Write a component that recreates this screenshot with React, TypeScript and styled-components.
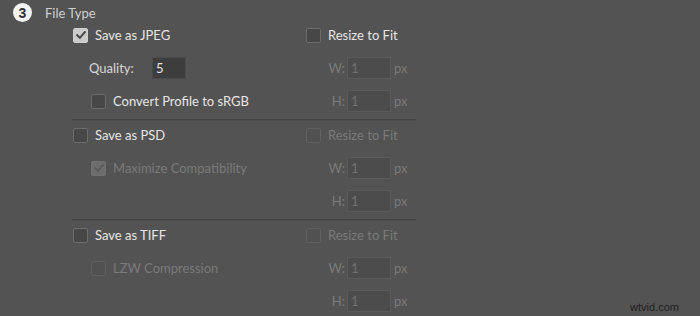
import React from 'react';
import styled, { createGlobalStyle } from 'styled-components';

const GlobalStyle = createGlobalStyle`
  html, body {
    margin: 0;
    padding: 0;
    background: #535353;
  }
  body {
    font-family: Lato, "Liberation Sans", sans-serif;
    -webkit-font-smoothing: antialiased;
  }
`;

type Row = {
  label: string;
  checked: boolean;
  disabled: boolean;
  sub: { kind: 'quality' } | { kind: 'check'; label: string; checked: boolean; disabled: boolean };
};

const sections: Row[] = [
  {
    label: 'Save as JPEG',
    checked: true,
    disabled: false,
    sub: { kind: 'quality' },
  },
  {
    label: 'Save as PSD',
    checked: false,
    disabled: true,
    sub: { kind: 'check', label: 'Maximize Compatibility', checked: true, disabled: true },
  },
  {
    label: 'Save as TIFF',
    checked: false,
    disabled: true,
    sub: { kind: 'check', label: 'LZW Compression', checked: false, disabled: true },
  },
];

const CheckBox: React.FC<{ checked: boolean; disabled: boolean }> = ({ checked, disabled }) => (
  <Box $checked={checked} $disabled={disabled}>
    {checked && (
      <svg width="12" height="12" viewBox="0 0 12 12">
        <polyline
          points="2.2,6.2 4.9,8.8 9.8,3.2"
          fill="none"
          stroke={disabled ? '#5a5a5a' : '#474747'}
          strokeWidth="2"
          strokeLinecap="square"
        />
      </svg>
    )}
  </Box>
);

const SizeField: React.FC<{ axis: string; disabled: boolean }> = ({ axis, disabled }) => (
  <SizeRow $disabled={disabled}>
    <AxisLabel>{axis}:</AxisLabel>
    <Field $disabled={disabled} $width={44}>1</Field>
    <Unit>px</Unit>
  </SizeRow>
);

const App: React.FC = () => {
  return (
    <>
      <GlobalStyle />
      <Page>
        <Header>
          <StepBadge>3</StepBadge>
          <Title>File Type</Title>
        </Header>
        <Body>
          {sections.map((s, i) => {
            const resizeDisabled = i > 0;
            return (
              <Section key={s.label} $first={i === 0}>
                <CheckRow $indent={1} $disabled={false}>
                  <CheckBox checked={s.checked} disabled={false} />
                  <span>{s.label}</span>
                </CheckRow>
                <CheckRow $indent={0} $disabled={resizeDisabled}>
                  <CheckBox checked={false} disabled={resizeDisabled} />
                  <span>Resize to Fit</span>
                </CheckRow>

                {s.sub.kind === 'quality' ? (
                  <QualityRow>
                    <QualityLabel>Quality:</QualityLabel>
                    <Field $disabled={false} $width={34}>5</Field>
                  </QualityRow>
                ) : (
                  <CheckRow $indent={19} $disabled={s.sub.disabled}>
                    <CheckBox checked={s.sub.checked} disabled={s.sub.disabled} />
                    <span>{s.sub.label}</span>
                  </CheckRow>
                )}
                <SizeField axis="W" disabled />

                {s.sub.kind === 'quality' ? (
                  <CheckRow $indent={19} $disabled={false}>
                    <CheckBox checked={false} disabled={false} />
                    <span>Convert Profile to sRGB</span>
                  </CheckRow>
                ) : (
                  <div />
                )}
                <SizeField axis="H" disabled />
              </Section>
            );
          })}
        </Body>
        <Watermark>wtvid.com</Watermark>
      </Page>
    </>
  );
};

export default App;

const Page = styled.div`
  position: relative;
  width: 700px;
  height: 316px;
  overflow: hidden;
  padding: 3px 0 0 13px;
  box-sizing: border-box;
  background: #535353;
`;

const Header = styled.div`
  display: flex;
  align-items: center;
  gap: 13px;
  height: 19px;
`;

const StepBadge = styled.div`
  width: 19px;
  height: 19px;
  border-radius: 50%;
  background: #f2f2f2;
  color: #2e2e2e;
  font-family: "Liberation Sans", Arial, sans-serif;
  font-weight: 700;
  font-size: 14px;
  display: flex;
  align-items: center;
  justify-content: center;
`;

const Title = styled.div`
  color: #cfcfcf;
  font-size: 13px;
`;

const Body = styled.div`
  margin: 2px 0 0 59px;
  width: 344px;
`;

const Section = styled.div<{ $first: boolean }>`
  display: grid;
  grid-template-columns: 234px 1fr;
  grid-auto-rows: 22px;
  row-gap: 11px;
  padding: ${(p) => (p.$first ? '0' : '4px')} 0 7px;
  border-bottom: 1px solid #444444;
  box-shadow: 0 1px 0 #4d4d4d;

  &:last-child {
    border-bottom: none;
    box-shadow: none;
  }
`;

const CheckRow = styled.label<{ $indent: number; $disabled: boolean }>`
  display: flex;
  align-items: center;
  gap: 7px;
  padding-left: ${(p) => p.$indent}px;
  font-size: 13px;
  color: ${(p) => (p.$disabled ? '#7a7a7a' : '#e6e6e6')};
  white-space: nowrap;
`;

const Box = styled.span<{ $checked: boolean; $disabled: boolean }>`
  width: 13px;
  height: 13px;
  flex: none;
  border-radius: 2px;
  display: flex;
  align-items: center;
  justify-content: center;
  border: 1px solid
    ${(p) => (p.$checked ? (p.$disabled ? '#707070' : '#cfcfcf') : p.$disabled ? '#606060' : '#6c6c6c')};
  background: ${(p) =>
    p.$checked ? (p.$disabled ? '#6e6e6e' : '#cbcbcb') : p.$disabled ? '#515151' : '#474747'};
`;

const QualityRow = styled.div`
  display: flex;
  align-items: center;
  padding-left: 17px;
`;

const QualityLabel = styled.span`
  width: 63px;
  font-size: 13px;
  color: #d8d8d8;
`;

const Field = styled.div<{ $disabled: boolean; $width: number }>`
  box-sizing: border-box;
  width: ${(p) => p.$width}px;
  height: 22px;
  padding: 2px 0 0 3px;
  font-size: 13px;
  line-height: 17px;
  border: 1px solid ${(p) => (p.$disabled ? '#5a5a5a' : '#4b4b4b')};
  background: ${(p) => (p.$disabled ? '#4c4c4c' : '#3d3d3d')};
  color: ${(p) => (p.$disabled ? '#727272' : '#e4e4e4')};
`;

const SizeRow = styled.div<{ $disabled: boolean }>`
  display: flex;
  align-items: center;
  color: ${(p) => (p.$disabled ? '#7a7a7a' : '#e6e6e6')};
  font-size: 13px;
`;

const AxisLabel = styled.span`
  width: 39px;
  text-align: right;
  margin-right: 2px;
`;

const Unit = styled.span`
  margin-left: 3px;
`;

const Watermark = styled.div`
  position: absolute;
  right: 21px;
  bottom: 3px;
  font-family: "Liberation Sans", Arial, sans-serif;
  font-size: 11px;
  color: #1f1f1f;
`;
